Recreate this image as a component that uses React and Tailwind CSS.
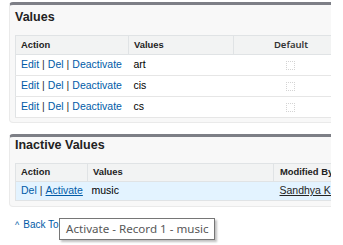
import React from "react";

const link = "text-[#015ba7] hover:underline";

const activeRows = ["art", "cis", "cs"];

const Sep = () => <span className="text-[#333] px-[3px]">|</span>;

const App = () => {
  return (
    <div className="relative w-[343px] h-[245px] bg-white overflow-hidden font-['Liberation_Sans',Arial,sans-serif]">
      <div className="w-[331px] overflow-hidden pt-[2px]">
        {/* Values */}
        <div className="ml-[9px] w-[360px] bg-[#f8f8f8] border border-[#eaeaea] border-t-[3px] border-t-[#7d7f86] rounded-[4px] px-[5px] pb-[4px]">
          <div className="h-[30px] pt-[4px] leading-[16px] text-[12.5px] font-bold text-[#222]">
            Values
          </div>
          <table className="w-[334px] border-collapse bg-white border border-[#e0e3e5] text-[10.5px]">
            <thead>
              <tr className="h-[19px] bg-[#f2f3f3] text-[9.4px] font-bold text-[#222] text-left">
                <th className="w-[113px] pl-[5px] border-b border-[#e0e3e5]">Action</th>
                <th className="w-[105px] pl-[5px] border-b border-l border-[#e0e3e5]">Values</th>
                <th className="pl-0 text-center border-b border-l border-[#e0e3e5] font-semibold font-['Noto_Sans',sans-serif] text-[9.5px] text-[#333]">
                  Default
                </th>
              </tr>
            </thead>
            <tbody>
              {activeRows.map((v) => (
                <tr key={v} className="h-[21px] border-b border-[#e6e6e6]">
                  <td className="pl-[5px] whitespace-nowrap">
                    <a className={link}>Edit</a>
                    <Sep />
                    <a className={link}>Del</a>
                    <Sep />
                    <a className={link}>Deactivate</a>
                  </td>
                  <td className="pl-[5px] text-black">{v}</td>
                  <td>
                    <div className="mx-auto w-[9px] h-[9px] border border-dotted border-[#d4d4d4]" />
                  </td>
                </tr>
              ))}
            </tbody>
          </table>
        </div>

        {/* Inactive Values */}
        <div className="mt-[11px] ml-[9px] w-[360px] bg-[#f8f8f8] border border-[#eaeaea] border-t-[3px] border-t-[#7d7f86] rounded-[4px] px-[5px] pb-[5px]">
          <div className="h-[26px] leading-[16px] text-[12.5px] font-bold text-[#222]">
            Inactive Values
          </div>
          <table className="w-[344px] border-collapse bg-white border border-[#e0e3e5] text-[10.5px]">
            <thead>
              <tr className="h-[18px] bg-[#f2f3f3] text-[9.4px] font-bold text-[#222] text-left">
                <th className="w-[72px] pl-[5px] border-b border-[#e0e3e5]">Action</th>
                <th className="w-[186px] pl-[5px] border-b border-l border-[#e0e3e5]">Values</th>
                <th className="pl-[6px] border-b border-l border-[#e0e3e5] whitespace-nowrap">Modified By</th>
              </tr>
            </thead>
            <tbody>
              <tr className="h-[19px] bg-[#e3f3ff]">
                <td className="pl-[5px] whitespace-nowrap">
                  <a className={link}>Del</a>
                  <Sep />
                  <a className="text-[#015ba7] underline">Activate</a>
                </td>
                <td className="pl-[4px] text-black">music</td>
                <td className="pl-[6px] whitespace-nowrap">
                  <a className="text-[#222] underline">Sandhya K,</a>
                </td>
              </tr>
            </tbody>
          </table>
        </div>

        <div className="mt-[12px] ml-[15px] flex items-center gap-[4px] text-[10px] leading-[12px] text-[#015ba7]">
          <span className="text-[9px]">^</span>
          <span>Back To Top</span>
        </div>
      </div>

      {/* tooltip */}
      <div className="absolute left-[59px] top-[218px] h-[22px] w-[156px] pl-[6px] flex items-center bg-white border border-[#767676] shadow-[2px_2px_2px_rgba(0,0,0,0.25)] text-[11.6px] text-[#575757] font-['Noto_Sans',sans-serif] whitespace-nowrap">
        Activate - Record 1 - music
      </div>
    </div>
  );
};

export default App;
